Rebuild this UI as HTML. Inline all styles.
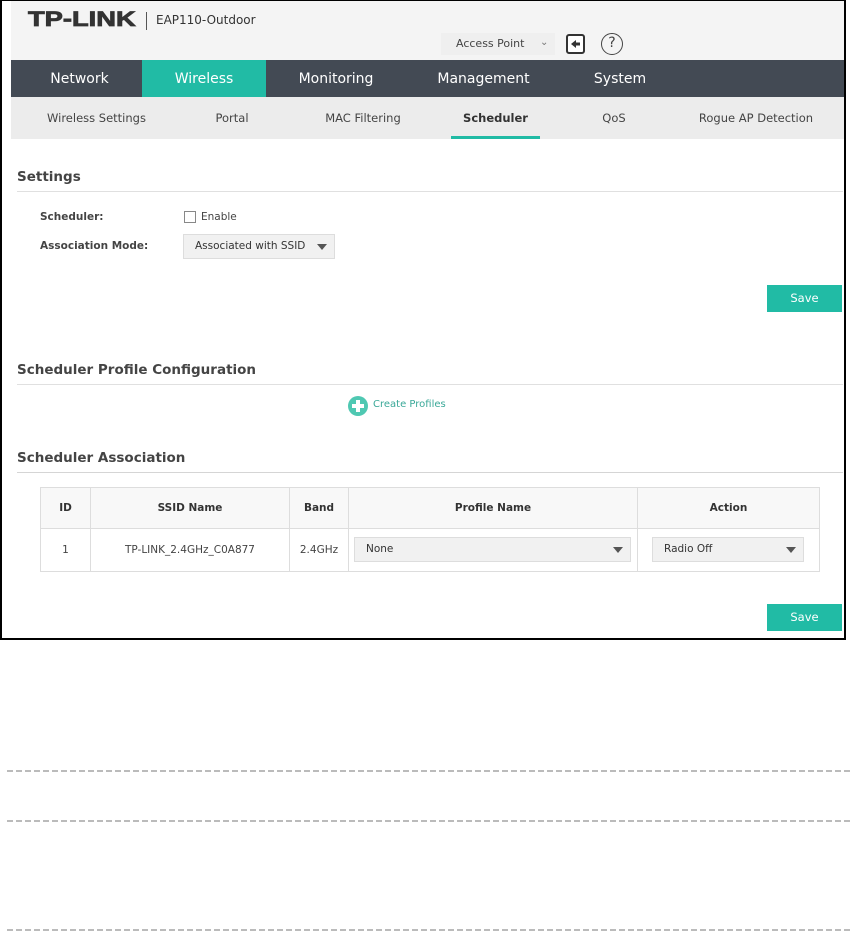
<!DOCTYPE html>
<html><head><meta charset="utf-8"><style>
*{box-sizing:border-box;margin:0;padding:0}
body{width:854px;height:931px;background:#fff;font-family:"DejaVu Sans","Liberation Sans",sans-serif;color:#333;position:relative;overflow:hidden}
.a{position:absolute}
.frame{left:0;top:0;width:846px;height:640px;border:2px solid #000;border-top:1px solid #000}
.hdr{left:11px;top:0;width:833px;height:60px;background:#f4f4f4}
.nav{left:11px;top:60px;width:833px;height:37px;background:#434a54}
.nav span{position:absolute;top:1px;line-height:37px;color:#fff;font-size:14px;text-align:center}
.sub{left:11px;top:97px;width:833px;height:42px;background:#ececec}
.sub span{position:absolute;top:0;line-height:42px;font-size:11.5px;color:#444;text-align:center}
h3{position:absolute;font-size:13.5px;font-weight:bold;color:#444;left:17px}
.ln{position:absolute;left:17px;width:826px;height:1px;background:#e0e0e0}
.lbl{font-size:10.5px;font-weight:bold;color:#444}
.sel{background:#f1f1f1;border:1px solid #ddd;font-size:10.5px;color:#333}
.tri{position:absolute;width:0;height:0;border-left:5px solid transparent;border-right:5px solid transparent;border-top:6px solid #555}
.save{background:#21bba5;color:#fff;font-size:11.5px;text-align:center;width:75px;height:27px;line-height:27px}
table{border-collapse:collapse;position:absolute;left:40px;top:487px;width:780px;font-size:10.5px}
td,th{border:1px solid #ddd;text-align:center}
th{height:41px;background:#f8f8f8;font-weight:bold;color:#333}
td{height:43px;color:#444}
.dash{position:absolute;left:7px;width:844px;height:2px;background:repeating-linear-gradient(90deg,#bbb 0 6px,transparent 6px 9px)}
</style></head><body>
<div class="a hdr"></div>
<div class="a" style="left:28px;top:8px;font-size:21px;font-weight:bold;color:#333;font-family:'Liberation Sans',sans-serif;transform:scaleX(1.3);transform-origin:0 0;-webkit-text-stroke:0.8px #333">TP-LINK</div>
<div class="a" style="left:146px;top:12px;width:1px;height:18px;background:#555"></div>
<div class="a" style="left:156px;top:13px;font-size:12px;color:#333">EAP110-Outdoor</div>
<div class="a" style="left:441px;top:33px;width:114px;height:22px;background:#efefef"></div>
<div class="a" style="left:456px;top:37px;font-size:11px;color:#444">Access Point</div>
<div class="a" style="left:540px;top:37px;font-size:10px;color:#777">⌄</div>
<div class="a" style="left:566px;top:34px;width:19px;height:20px;border:2px solid #333;border-radius:3px;background:#fff"></div>
<svg class="a" style="left:569px;top:38px" width="13" height="12"><path d="M2 6L7 2V4.5H11V7.5H7V10Z" fill="#333"/></svg>
<div class="a" style="left:601px;top:33px;width:22px;height:22px;border:1.5px solid #444;border-radius:50%;text-align:center;font-size:14px;line-height:19px;color:#444">?</div>
<div class="a nav">
<span style="left:0;width:137px">Network</span>
<span style="left:131px;width:124px;background:#21bba5;top:0;height:37px;line-height:39px">Wireless</span>
<span style="left:255px;width:140px">Monitoring</span>
<span style="left:395px;width:155px">Management</span>
<span style="left:550px;width:118px">System</span>
</div>
<div class="a sub">
<span style="left:0;width:171px">Wireless Settings</span>
<span style="left:171px;width:100px">Portal</span>
<span style="left:271px;width:162px">MAC Filtering</span>
<span style="left:440px;width:89px;font-weight:bold;color:#333">Scheduler</span>
<span style="left:440px;top:39px;width:89px;height:3px;background:#21bba5"></span>
<span style="left:569px;width:68px">QoS</span>
<span style="left:670px;width:150px">Rogue AP Detection</span>
</div>
<h3 style="top:169px">Settings</h3>
<div class="ln" style="top:191px"></div>
<div class="a lbl" style="left:40px;top:211px">Scheduler:</div>
<div class="a" style="left:184px;top:211px;width:12px;height:12px;border:1px solid #888;background:#fff"></div>
<div class="a" style="left:201px;top:211px;font-size:10.5px;color:#444">Enable</div>
<div class="a lbl" style="left:40px;top:240px">Association Mode:</div>
<div class="a sel" style="left:183px;top:234px;width:152px;height:25px;padding:5px 11px">Associated with SSID</div>
<div class="tri" style="left:317px;top:244px"></div>
<div class="a save" style="left:767px;top:285px">Save</div>
<h3 style="top:362px">Scheduler Profile Configuration</h3>
<div class="ln" style="top:384px"></div>
<div class="a" style="left:348px;top:396px;width:20px;height:20px;border-radius:50%;background:#4fc8b2"></div>
<div class="a" style="left:356px;top:400px;width:4px;height:12px;background:#fff"></div>
<div class="a" style="left:352px;top:404px;width:12px;height:4px;background:#fff"></div>
<div class="a" style="left:373px;top:399px;font-size:10px;color:#3aa898">Create Profiles</div>
<h3 style="top:450px">Scheduler Association</h3>
<div class="ln" style="top:472px;background:#d5d5d5"></div>
<table>
<tr><th style="width:50px">ID</th><th style="width:199px">SSID Name</th><th style="width:59px">Band</th><th style="width:289px">Profile Name</th><th>Action</th></tr>
<tr><td>1</td><td>TP-LINK_2.4GHz_C0A877</td><td>2.4GHz</td><td></td><td></td></tr>
</table>
<div class="a sel" style="left:354px;top:537px;width:277px;height:25px;padding:5px 11px">None</div>
<div class="tri" style="left:613px;top:547px"></div>
<div class="a sel" style="left:652px;top:537px;width:152px;height:25px;padding:5px 11px">Radio Off</div>
<div class="tri" style="left:786px;top:547px"></div>
<div class="a save" style="left:767px;top:604px">Save</div>
<div class="a frame"></div>
<div class="dash" style="top:770px"></div>
<div class="dash" style="top:820px"></div>
<div class="dash" style="top:929px"></div>
</body></html>
